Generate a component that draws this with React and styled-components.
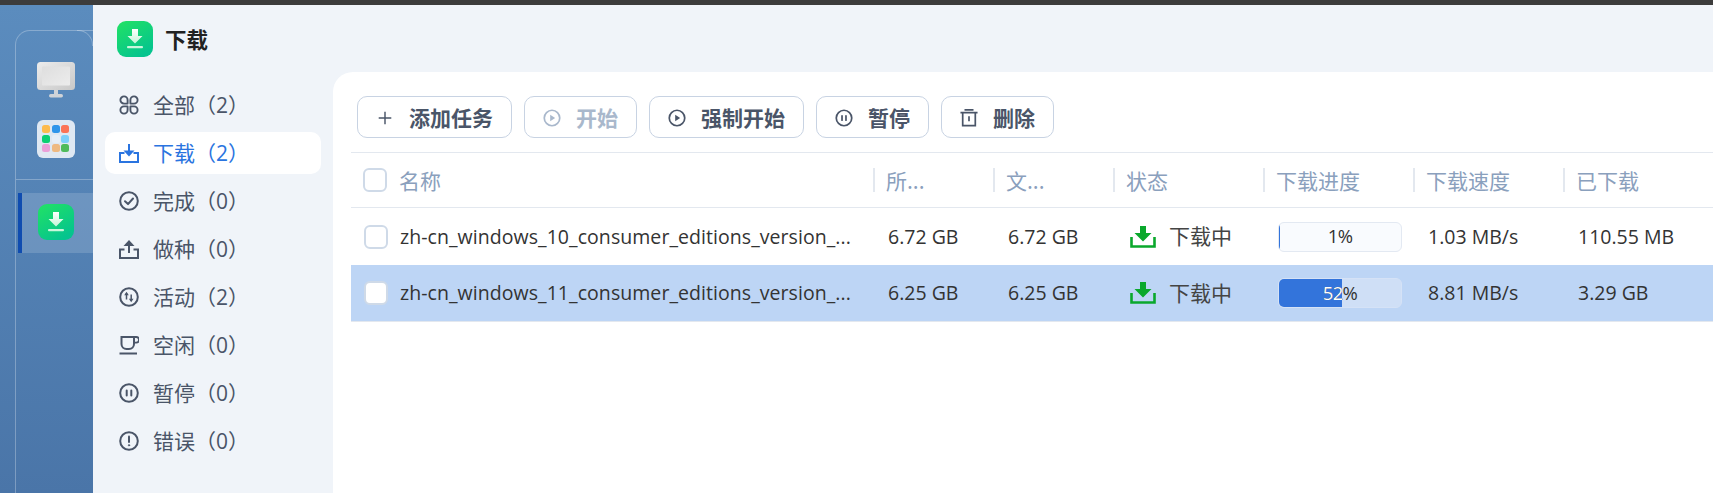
import React from "react";
import styled, { createGlobalStyle } from "styled-components";

const Global = createGlobalStyle`
  html, body { margin: 0; padding: 0; height: 100%; overflow: hidden; background: #f0f4f9; }
  #root { height: 100%; }
  * { box-sizing: border-box; }
`;

const CJK = `"Noto Sans CJK SC", sans-serif`;
const LATIN = `"Open Sans", "Noto Sans CJK SC", sans-serif`;

const Page = styled.div`
  height: 493px;
  display: flex;
  flex-direction: column;
  overflow: hidden;
  font-family: ${CJK};
`;
const TopBar = styled.div`
  height: 5px;
  flex: none;
  background: #3c3c3c;
`;
const Body = styled.div`
  flex: 1;
  display: flex;
  min-height: 0;
`;
const Rail = styled.aside`
  width: 93px;
  flex: none;
  padding: 25px 0 0 15px;
  background: linear-gradient(180deg, #5b8cbe 0%, #4a75a8 100%);
`;
const RailFrame = styled.div`
  height: 100%;
  border: 1px solid rgba(255, 255, 255, 0.28);
  border-bottom: 0;
  border-right: 0;
  border-radius: 15px 0 0 0;
  position: relative;
  &::after {
    content: "";
    position: absolute;
    top: -1px;
    right: 0;
    width: 15px;
    height: 15px;
    border-top: 1px solid rgba(255, 255, 255, 0.28);
    border-right: 1px solid rgba(255, 255, 255, 0.28);
    border-radius: 0 15px 0 0;
  }
`;
const RailApps = styled.div`
  height: 149px;
  padding: 31px 0 0 21px;
  display: flex;
  flex-direction: column;
  gap: 22px;
  border-bottom: 1px solid rgba(255, 255, 255, 0.28);
`;
const RailActive = styled.div`
  margin: 13px 0 0 2px;
  height: 60px;
  padding: 11px 0 0 16px;
  background: rgba(255, 255, 255, 0.15);
  border-left: 4px solid #0f4cb0;
`;
const Main = styled.main`
  flex: 1;
  min-width: 0;
  display: flex;
  flex-direction: column;
`;
const Header = styled.header`
  height: 67px;
  flex: none;
  display: flex;
  align-items: center;
  gap: 12px;
  padding: 1px 0 0 24px;
`;
const Title = styled.h1`
  margin: 0;
  font: 700 21.5px/1 ${CJK};
  color: #222;
`;
const Content = styled.div`
  flex: 1;
  min-height: 0;
  display: flex;
`;
const Menu = styled.nav`
  width: 240px;
  flex: none;
  padding: 12px 12px 0;
  display: flex;
  flex-direction: column;
  gap: 6px;
`;
const MenuItem = styled.div`
  height: 42px;
  display: flex;
  align-items: center;
  gap: 14px;
  padding-left: 14px;
  border-radius: 10px;
  font: 400 21px/1 ${LATIN};
  background: ${(p) => (p.$active ? "#fff" : "transparent")};
  color: ${(p) => (p.$active ? "#2a74e0" : "#4a5568")};
`;
const Panel = styled.section`
  flex: 1;
  min-width: 0;
  background: #fff;
  border-radius: 20px 0 0 0;
  padding: 24px 0 0 18px;
`;
const Toolbar = styled.div`
  display: flex;
  gap: 12px;
  padding: 0 0 14px 6px;
  border-bottom: 1px solid #e3e8ef;
`;
const Button = styled.button`
  height: 42px;
  display: flex;
  align-items: center;
  gap: 15px;
  padding: 1px 18px 0;
  background: #fff;
  border: 1px solid #c8d3e3;
  border-radius: 10px;
  font: 700 21px/1 ${CJK};
  color: ${(p) => (p.disabled ? "#a9b8cc" : "#4a5568")};
`;
const COLS = "523px 120px 120px 150px 150px 150px 1fr";
const HeadRow = styled.div`
  height: 55px;
  display: grid;
  grid-template-columns: ${COLS};
  align-items: center;
  border-bottom: 1px solid #e3e8ef;
`;
const HeadCell = styled.div`
  height: 24px;
  display: flex;
  align-items: center;
  gap: 12px;
  padding-left: ${(p) => (p.$first ? "12px" : "11px")};
  margin-left: ${(p) => (p.$first ? "0" : "-1px")};
  font: 400 21px/1 ${CJK};
  color: #8aa0bd;
  border-left: ${(p) => (p.$first ? "0" : "2px solid #e3e8ef")};
`;
const Row = styled.div`
  height: 57px;
  display: grid;
  grid-template-columns: ${COLS};
  align-items: center;
  background: ${(p) => (p.$selected ? "#bdd5f5" : "#fff")};
  border-bottom: ${(p) => (p.$selected ? "1px solid #e3e8ef" : "0")};
`;
const Cell = styled.div`
  padding-left: 14px;
  font: 400 19.5px/1 ${LATIN};
  color: #333;
  white-space: nowrap;
  min-width: 0;
`;
const NameCell = styled(Cell)`
  display: flex;
  align-items: center;
  gap: 12px;
  padding: 0 0 0 13px;
`;
const NameText = styled.span`
  line-height: 26px;
  letter-spacing: 0.06px;
`;
const Check = styled.span`
  flex: none;
  width: 24px;
  height: 24px;
  border: 2px solid #cfdae8;
  border-radius: 6px;
  background: #fff;
`;
const StatusCell = styled(Cell)`
  display: flex;
  align-items: center;
  gap: 13px;
  padding-left: 16px;
  font-size: 21px;
  color: #444;
`;
const ProgressCell = styled(Cell)`
  padding-left: 14px;
`;
const Bar = styled.div`
  position: relative;
  width: 124px;
  height: 30px;
  border: 1px solid ${(p) => (p.$selected ? "#d5e2f6" : "#e3e9f2")};
  border-radius: 6px;
  overflow: hidden;
  background: ${(p) => (p.$selected ? "#cfdff6" : "#f9fbfe")};
`;
const BarFill = styled.div`
  height: 100%;
  background: #3374db;
`;
const BarLabel = styled.span`
  position: absolute;
  inset: 0;
  display: flex;
  align-items: center;
  justify-content: center;
  font-size: 18.5px;
  letter-spacing: -0.7px;
  color: ${(p) => p.$color};
`;

const Ic = ({ size = 20, children, color = "currentColor", sw = 2 }) => (
  <svg width={size} height={size} viewBox="0 0 20 20" fill="none" stroke={color} strokeWidth={sw} strokeLinecap="round" strokeLinejoin="round" style={{ flex: "none" }}>
    {children}
  </svg>
);

const IconAll = () => (
  <Ic sw={1.9}>
    <path d="M8.6 8.6H5a3.6 3.6 0 1 1 3.6-3.6Z" />
    <path d="M11.4 8.6H15a3.6 3.6 0 1 0-3.6-3.6Z" />
    <path d="M8.6 11.4H5a3.6 3.6 0 1 0 3.6 3.6Z" />
    <path d="M11.4 11.4H15a3.6 3.6 0 1 1-3.6 3.6Z" />
  </Ic>
);
const IconDown = () => (
  <Ic>
    <path d="M5.5 10H1V19H19V10H14.5" strokeLinecap="butt" strokeLinejoin="miter" />
    <path d="M10 1V9" strokeLinecap="butt" />
    <path d="M4.5 7.5H15.5L10 13.5Z" fill="currentColor" stroke="none" />
  </Ic>
);
const IconCheck = () => (
  <Ic>
    <circle cx="10" cy="10" r="8.8" />
    <path d="M6 10.3l3 2.8 5-5.6" />
  </Ic>
);
const IconUp = () => (
  <Ic>
    <path d="M5.5 10.5H1V19H19V10.5H14.5" strokeLinecap="butt" strokeLinejoin="miter" />
    <path d="M10 5V14" strokeLinecap="butt" />
    <path d="M4.5 7H15.5L10 1Z" fill="currentColor" stroke="none" />
  </Ic>
);
const IconActive = () => (
  <Ic>
    <circle cx="10" cy="10" r="8.8" />
    <path d="M7.5 6v6.5M12.2 7.5V14" strokeWidth="1.5" strokeLinecap="butt" />
    <path d="M5.2 8.2L7.5 4.8 9.8 8.2ZM9.9 11.8l2.3 3.4 2.3-3.4Z" fill="currentColor" stroke="none" />
  </Ic>
);
const IconCup = () => (
  <Ic>
    <path d="M2.5 2H15V9a5 5 0 0 1-5 5H7.5a5 5 0 0 1-5-5Z" strokeLinejoin="miter" />
    <path d="M15 2h2.2a1.8 1.8 0 0 1 0 5.6H15" strokeWidth="1.8" />
    <path d="M0.5 18.5H18" strokeLinecap="butt" />
  </Ic>
);
const IconPause = () => (
  <Ic>
    <circle cx="10" cy="10" r="8.8" />
    <path d="M7.7 7.5v5M12.3 7.5v5" strokeLinecap="round" />
  </Ic>
);
const IconError = () => (
  <Ic>
    <circle cx="10" cy="10" r="8.8" />
    <path d="M10 5.5v5.5" />
    <circle cx="10" cy="14.3" r="0.7" fill="currentColor" strokeWidth="0.8" />
  </Ic>
);
const IconPlus = () => (
  <Ic size={18} sw={1.6}>
    <path d="M10 3v14M3 10h14" strokeLinecap="butt" />
  </Ic>
);
const IconPlay = () => (
  <Ic size={18} sw={1.9}>
    <circle cx="10" cy="10" r="8.6" />
    <path d="M8 6.5L13.5 10 8 13.5Z" fill="currentColor" stroke="none" />
  </Ic>
);
const IconPauseSm = () => (
  <Ic size={18} sw={1.9}>
    <circle cx="10" cy="10" r="8.6" />
    <path d="M7.8 7.5v5M12.2 7.5v5" />
  </Ic>
);
const IconTrash = () => (
  <Ic size={18} sw={1.9}>
    <path d="M0.5 4h19M5 1h10" strokeLinecap="butt" />
    <path d="M3 4V18.5H17V4" strokeLinejoin="miter" strokeLinecap="butt" />
    <path d="M10 8v5.5" strokeLinecap="butt" />
  </Ic>
);
const StatusIcon = () => (
  <svg width="26" height="22" viewBox="0 0 26 22" style={{ flex: "none" }}>
    <path d="M1.5 11V20.5H24.5V11" fill="none" stroke="#0aa82c" strokeWidth="2.6" />
    <path d="M10 0H16V7H21.5L13 15.5 4.5 7H10Z" fill="#0aa82c" />
  </svg>
);
const GreenIcon = ({ id }) => (
  <svg width="36" height="36" viewBox="0 0 36 36" style={{ display: "block" }}>
    <defs>
      <linearGradient id={id} x1="0" y1="0" x2="0.6" y2="1">
        <stop offset="0" stopColor="#22e264" />
        <stop offset="1" stopColor="#05c48e" />
      </linearGradient>
      <linearGradient id={id + "w"} x1="0" y1="0" x2="0" y2="1">
        <stop offset="0" stopColor="#ffffff" />
        <stop offset="1" stopColor="#c4f5d8" />
      </linearGradient>
    </defs>
    <rect width="36" height="36" rx="9" fill={`url(#${id})`} />
    <path d="M15 8H21V15H25.5L18 22.5 10.5 15H15Z" fill={`url(#${id}w)`} />
    <rect x="10" y="25" width="16" height="2.2" rx="1" fill="#c9f6dc" />
  </svg>
);
const DesktopIcon = () => (
  <svg width="38" height="36" viewBox="0 0 38 36" style={{ display: "block" }}>
    <defs>
      <linearGradient id="mon" x1="0" y1="0" x2="1" y2="1">
        <stop offset="0" stopColor="#ececec" />
        <stop offset="1" stopColor="#c8c8c8" />
      </linearGradient>
      <linearGradient id="scr" x1="0" y1="0" x2="1" y2="1">
        <stop offset="0" stopColor="#dedede" />
        <stop offset="1" stopColor="#ececec" />
      </linearGradient>
    </defs>
    <rect x="17" y="28" width="4" height="5" fill="#cfd3d8" />
    <rect x="12" y="32" width="14" height="3.5" rx="1.7" fill="#cfd3d8" />
    <rect width="38" height="28" rx="3.5" fill="url(#mon)" />
    <rect x="5" y="4.5" width="28" height="19" rx="1" fill="url(#scr)" />
  </svg>
);
const AppsTile = styled.div`
  width: 38px;
  height: 38px;
  padding: 5px;
  border-radius: 6px;
  background: #dfe8f2;
  display: grid;
  grid-template-columns: repeat(3, 8px);
  grid-auto-rows: 8px;
  gap: 1.5px;
`;
const AppDot = styled.span`
  border-radius: 2.5px;
  background: ${(p) => p.$c};
`;

const menu = [
  ["全部（2）", IconAll],
  ["下载（2）", IconDown, true],
  ["完成（0）", IconCheck],
  ["做种（0）", IconUp],
  ["活动（2）", IconActive],
  ["空闲（0）", IconCup],
  ["暂停（0）", IconPause],
  ["错误（0）", IconError],
];
const buttons = [
  ["添加任务", IconPlus],
  ["开始", IconPlay, true],
  ["强制开始", IconPlay],
  ["暂停", IconPauseSm],
  ["删除", IconTrash],
];
const heads = ["所...", "文...", "状态", "下载进度", "下载速度", "已下载"];
const rows = [
  { name: "zh-cn_windows_10_consumer_editions_version_...", size: "6.72 GB", pct: 1, speed: "1.03 MB/s", done: "110.55 MB" },
  { name: "zh-cn_windows_11_consumer_editions_version_...", size: "6.25 GB", pct: 52, speed: "8.81 MB/s", done: "3.29 GB", selected: true },
];
const dots = ["#fdbb4e", "#2f95ea", "#fb7356", "#0ccf72", "#e6eef7", "#7ccffb", "#ea9fd8", "#eeb981", "#4fbb5c"];

export default function App() {
  return (
    <Page>
      <Global />
      <TopBar />
      <Body>
        <Rail>
          <RailFrame>
            <RailApps>
              <DesktopIcon />
              <AppsTile>
                {dots.map((c) => (
                  <AppDot key={c} $c={c} />
                ))}
              </AppsTile>
            </RailApps>
            <RailActive>
              <GreenIcon id="g2" />
            </RailActive>
          </RailFrame>
        </Rail>
        <Main>
          <Header>
            <GreenIcon id="g1" />
            <Title>下载</Title>
          </Header>
          <Content>
            <Menu>
              {menu.map(([label, Icon, active]) => (
                <MenuItem key={label} $active={active}>
                  <Icon />
                  {label}
                </MenuItem>
              ))}
            </Menu>
            <Panel>
              <Toolbar>
                {buttons.map(([label, Icon, disabled]) => (
                  <Button key={label} disabled={disabled}>
                    <Icon />
                    {label}
                  </Button>
                ))}
              </Toolbar>
              <HeadRow>
                <HeadCell $first>
                  <Check />
                  名称
                </HeadCell>
                {heads.map((h) => (
                  <HeadCell key={h}>{h}</HeadCell>
                ))}
              </HeadRow>
              {rows.map((r) => (
                <Row key={r.name} $selected={r.selected}>
                  <NameCell>
                    <Check />
                    <NameText>{r.name}</NameText>
                  </NameCell>
                  <Cell>{r.size}</Cell>
                  <Cell>{r.size}</Cell>
                  <StatusCell>
                    <StatusIcon />
                    下载中
                  </StatusCell>
                  <ProgressCell>
                    <Bar $selected={r.selected}>
                      <BarFill style={{ width: `${r.pct}%` }} />
                      <BarLabel $color="#333">{r.pct}%</BarLabel>
                      <BarLabel $color="#fff" style={{ clipPath: `inset(0 ${100 - r.pct}% 0 0)` }}>
                        {r.pct}%
                      </BarLabel>
                    </Bar>
                  </ProgressCell>
                  <Cell>{r.speed}</Cell>
                  <Cell>{r.done}</Cell>
                </Row>
              ))}
            </Panel>
          </Content>
        </Main>
      </Body>
    </Page>
  );
}
